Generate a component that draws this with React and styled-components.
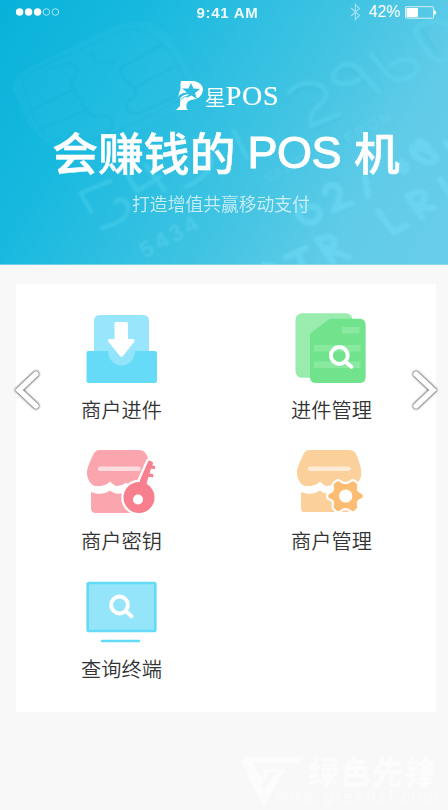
import React from 'react';
import styled, { createGlobalStyle } from 'styled-components';

const GlobalStyle = createGlobalStyle`
  * { box-sizing: border-box; }
  body {
    margin: 0;
    background: #f8f8f8;
    font-family: "Liberation Sans", "Noto Sans CJK SC", sans-serif;
  }
`;

const Screen = styled.div`
  position: relative;
  width: 448px;
  height: 810px;
  overflow: hidden;
  background: #f8f8f8;
`;

const Hero = styled.header`
  position: relative;
  display: flex;
  flex-direction: column;
  align-items: center;
  height: 265px;
  color: #fff;
  background: linear-gradient(121deg, #08b1da 0%, #18b9df 25%, #43c4e3 60%, #61cce8 80%, #69cde9 100%);
`;

const CardArt = styled.svg`
  position: absolute;
  inset: 0;
  width: 448px;
  height: 265px;
`;

const StatusBar = styled.div`
  position: relative;
  display: grid;
  grid-template-columns: 1fr auto 1fr;
  align-items: center;
  width: 100%;
  height: 24px;
  padding: 0 11px 0 16px;
`;

const Clock = styled.span`
  font-size: 15px;
  font-weight: 700;
  letter-spacing: 0.75px;
  padding-left: 2px;
  opacity: 0.92;
`;

const StatusRight = styled.div`
  display: flex;
  align-items: center;
  justify-content: flex-end;
  font-size: 15.6px;
`;

const Percent = styled.span`
  margin: 0 5px 0 8px;
`;

const Brand = styled.div`
  position: relative;
  display: flex;
  align-items: center;
  height: 32px;
  margin-top: 56px;
  padding-left: 6px;
`;

const BrandStar = styled.span`
  margin-left: 1px;
  font: 350 21px/32px "Noto Sans CJK SC", sans-serif;
`;

const BrandName = styled.span`
  display: inline-block;
  font: 28px/32px "Liberation Serif", serif;
  letter-spacing: 0.7px;
  -webkit-text-stroke: 0.2px #fff;
`;

const Headline = styled.h1`
  position: relative;
  display: flex;
  justify-content: center;
  margin: 6px 0 0;
  padding-left: 4px;
  font: 500 45.8px/66px "Noto Sans CJK SC", sans-serif;
  -webkit-text-stroke: 0.5px #fff;
  white-space: pre;
`;

const HeadlineLatin = styled.span`
  padding: 2px 13px 0 12px;
  font: 400 45px/66px "Liberation Sans", sans-serif;
  letter-spacing: -0.5px;
  -webkit-text-stroke: 1.1px #fff;
`;

const Tagline = styled.p`
  position: relative;
  margin: 3px 0 0;
  padding-right: 6px;
  font: 350 17.8px/28px "Noto Sans CJK SC", sans-serif;
  color: rgba(255, 255, 255, 0.72);
`;

const Panel = styled.main`
  display: grid;
  grid-template-columns: 210px 210px;
  grid-template-rows: 131px 128px auto;
  width: 420px;
  height: 428px;
  margin: 19px 0 0 16px;
  padding-top: 29px;
  background: #fff;
`;

const Tile = styled.div`
  display: flex;
  flex-direction: column;
  align-items: center;
`;

const TileIcon = styled.svg`
  width: 72px;
  height: 72px;
  overflow: visible;
`;

const TileLabel = styled.span`
  margin-top: 10px;
  padding-left: 1px;
  font: 350 20.2px/30px "Noto Sans CJK SC", sans-serif;
  color: #333;
`;

const Arrow = styled.svg`
  position: absolute;
  top: 364px;
  left: ${(p) => (p.$next ? '408px' : '10px')};
  width: 34px;
  height: 52px;
  transform: ${(p) => (p.$next ? 'scaleX(-1)' : 'none')};
  filter: drop-shadow(0 0 1px rgba(0, 0, 0, 0.65)) drop-shadow(0 0 1px rgba(0, 0, 0, 0.5));
`;

const Watermark = styled.div`
  position: absolute;
  left: 240px;
  top: 755px;
  display: flex;
  color: #fcfcfc;
`;

const WatermarkText = styled.div`
  display: flex;
  flex-direction: column;
  margin-left: 2px;
`;

const WatermarkName = styled.span`
  font: 900 31px/32px "Noto Sans CJK SC", sans-serif;
  letter-spacing: 1.4px;
  transform: skewX(-6deg);
`;

const WatermarkUrl = styled.span`
  margin-left: -2px;
  align-self: flex-end;
  margin-right: -2px;
  margin-left: -42px;
  font: italic 17px/19px "Liberation Sans", sans-serif;
  letter-spacing: 2px;
`;

function EmbossedCard() {
  return (
    <CardArt viewBox="0 0 448 265" fill="none" aria-hidden="true">
      <defs>
        <filter id="soft" x="-10%" y="-10%" width="120%" height="120%">
          <feGaussianBlur stdDeviation="0.9" />
        </filter>
      </defs>
      <g filter="url(#soft)">
        <path d="M12 88Q14 76 28 68L112 27Q132 18 151 23Q164 28 174 42L194 79Q196 96 184 108L119 139Q72 157 44 140Q31 132 24 116Z" fill="#36c9e9" opacity=".16" />
        <g stroke="#079fcc" strokeWidth="1.6" opacity=".24">
          <path d="M22 84Q24 76 35 70L115 34Q134 25 149 33L172 54L187 83Q190 92 179 101L116 132Q78 145 57 140Q44 137 36 121Z" opacity=".5" />
          <path d="M50 68L70 63Q82 66 76 76Q68 79 72 86L87 111Q91 119 103 115Q114 118 112 125Q108 136 97 138M92 52Q94 64 103 62L116 63M163 44L124 66Q118 70 122 76L134 88Q139 97 129 101Q122 107 130 113L137 114L187 91M28 112L72 90M37 131L86 110M134 88L175 66" />
        </g>
        <g stroke="#65dcf5" strokeLinecap="round" strokeLinejoin="round" opacity=".3">
          <path strokeWidth="4.5" d="M289 92Q299 79 319 85Q331 91 323 102Q308 112 311 126L339 114" />
          <path strokeWidth="4.5" d="M379 92L360 70Q348 58 336 70Q330 79 336 82Q349 86 359 79L364 75" />
          <path strokeWidth="4.5" d="M371 54L389 76Q398 84 413 75Q422 69 414 61Q402 56 386 68" />
          <path strokeWidth="4.5" d="M417 27Q413 34 428 52Q438 66 450 57M417 27Q432 18 446 24" />
          <path strokeWidth="4.5" d="M110 181L81 193L91 211M102 228Q132 221 128 205Q123 196 115 202M127 174L137 191L160 177M146 165L164 190M186 187Q220 170 209 153L195 141M234 131L247 158" />
        </g>
        <g stroke="#078fbb" strokeWidth="1" strokeLinecap="round" opacity=".2">
          <path d="M293 94Q307 81 322 91M315 129L341 117M338 71Q352 64 366 84M375 53L390 72M421 28L438 55M83 193L92 208M105 231Q124 224 130 211" />
        </g>
      </g>
      <g filter="url(#soft)" fill="#72dcf5" fontFamily="Liberation Sans" fontWeight="700">
        <text transform="translate(145 259) rotate(-29)" fontSize="23" letterSpacing="4" opacity=".36">5434</text>
        <text transform="translate(267 184) rotate(-29)" fontSize="15" letterSpacing="1" opacity=".22">VALID</text>
        <text transform="translate(348 145) rotate(-29)" fontSize="16" letterSpacing="2" opacity=".28">FROM</text>
        <g stroke="#76e2fb" strokeWidth="6.5" strokeLinecap="round" strokeLinejoin="round" fill="none" opacity=".38">
          <path d="M299 208Q296 218 306 222Q319 225 320 212Q316 203 299 208M325 193Q326 181 338 187Q343 194 334 210L351 203M365 178L368 196" />
          <path d="M417 148Q407 144 416 157Q433 168 436 157Q430 149 417 148M419 148Q414 136 428 145M396 165L404 172Q411 166 401 162M446 143L456 155" />
          <path d="M317 240L333 262M317 240Q337 232 334 246L325 249L349 257M286 257L306 248M297 252L305 271M378 211L393 232L406 226M407 196L422 217M407 196Q426 187 425 199L417 207L434 208M440 179L449 193M264 265Q280 265 276 274" />
        </g>
      </g>
      <path d="M0 264.5H448" stroke="#a7deea" opacity=".6" />
    </CardArt>
  );
}

const Signal = () => (
  <svg width="44" height="12" viewBox="16 6 44 12" fill="none">
    {[19.6, 28.6, 37.6].map((x) => <circle key={x} cx={x} cy="12" r="3.7" fill="#fff" />)}
    {[46.4, 55.4].map((x) => <circle key={x} cx={x} cy="12" r="3.3" stroke="#fff" strokeWidth=".8" opacity=".8" />)}
  </svg>
);

const Bluetooth = () => (
  <svg width="11" height="18" viewBox="0 0 11 18" fill="none" stroke="#fff" strokeWidth="1.1" opacity=".5">
    <path d="M1 5L9.5 12.5L5.3 16.5V1.5L9.5 5.5L1 13" />
  </svg>
);

const Battery = () => (
  <svg width="32" height="13" viewBox="0 0 32 13">
    <rect x=".5" y=".7" width="28" height="11.5" rx=".8" fill="none" stroke="#fff" opacity=".75" />
    <path d="M1.5 2H13V11.2H1.5Z" fill="#fff" />
    <path d="M29 4Q31.5 5 31.3 6.5Q31.5 8 29 9Z" fill="#fff" />
  </svg>
);

const BrandMark = () => (
  <svg width="29" height="32" viewBox="174 80 29 32">
    <path fill="#fff" d="M180 81H193Q202 83 202 90Q201 99 190 100Q186 101 185.5 105Q185 109 187 110H175L179 106V100Q179 95 188 94L185 98L190.5 95.5L196 99L194 93L199 89L192.5 88.5L190 83L187.5 88.5L181 88.5L186 92.5Q178 93 176.5 98L179.5 89V84Z" />
    <path d="M178 103Q180 97 187 96" stroke="#2abddf" strokeWidth=".8" fill="none" />
  </svg>
);

const Lens = ({ cx, cy }) => (
  <g stroke="#fff" fill="none" strokeLinecap="round">
    <circle cx={cx} cy={cy} r="8.4" strokeWidth="4" />
    <path d={`M${cx + 6.4} ${cy + 6.2}L${cx + 12} ${cy + 11.3}`} strokeWidth="4" />
  </g>
);

const Submit = () => (
  <TileIcon viewBox="85 313 72 72">
    <path d="M94 352V321Q94 315 100 315H143Q149 315 149 321V352Z" fill="#98e6fb" />
    <path d="M88 351H155Q157 351 157 353V381Q157 383 155 383H88.5Q86.5 383 86.5 381V353Q86.5 351 88 351Z" fill="#65dbf8" />
    <path d="M108 351H135A13.5 14.5 0 0 1 108 351Z" fill="#91e4fa" />
    <path d="M116 322H126.5Q128 322 128 324V339H133Q135.5 340 134 342L123 356Q121.5 358 120 356L108.5 342Q107 340 109 339H114.5V324Q114.5 322 116 322Z" fill="#fff" />
  </TileIcon>
);

const Documents = () => (
  <TileIcon viewBox="295 313 72 72">
    <rect x="295.5" y="313.3" width="57" height="64.5" rx="6.5" fill="#9aecae" />
    <path d="M332 318.7H360Q365.6 319 365.6 325V377Q365.6 383 359.5 383H316Q310 383 310 377V335Q310 333 312 332L328 320Q330 318.7 332 318.7Z" fill="#71e38c" />
    <path d="M342 327H359.5V333.5H342ZM314 345H360.5V351.5H314ZM314 361.5H360.5V368H314Z" fill="#88e99f" />
    <Lens cx={339.3} cy={355.5} />
  </TileIcon>
);

const Shop = ({ color, shade }) => (
  <>
    <path d="M100 450H139C144 450 146 453 147.5 457C149 463 151.5 466 151.2 474C151 481 146 486 140 486C134 486 129 485 126 482.7Q121 486.500 116 486Q112.500 484.500 110 481.500C106 486 100 486.3 96 486C91 486 87 479 87 473C87 467 91 460 93 455C95 451 97 450 100 450Z" fill={color} />
    <path d="M91 492C98 495 105 494 110 490.500C115 494.500 122 495 126 491L145 493V513H96Q91 513 91 508Z" fill={color} />
    <path d="M100 468.7H138.5" stroke={shade} strokeWidth="4.5" strokeLinecap="round" />
  </>
);

const KeyShape = ({ fill, ...rest }) => (
  <g fill={fill} {...rest}>
    <circle cx="139" cy="497.5" r="15.5" />
    <path d="M140 480L148.2 461.3Q149 460 150.5 461L152.5 462Q153.3 462.7 152.8 464L152.3 465.5L155 466V469L151 468.7L149.5 473.5L153.2 474V477.6L148.5 476.8L146.5 484L140 490Z" />
  </g>
);

const ShopKey = () => (
  <TileIcon viewBox="85 444 72 72">
    <Shop color="#fba5ae" shade="#fddce0" />
    <KeyShape fill="#fff" stroke="#fff" strokeWidth="4.6" />
    <KeyShape fill="#f8808e" />
    <circle cx="138" cy="499.5" r="5" fill="#fff" />
  </TileIcon>
);

const gear = 'M336.500 482Q338.500 480.500 340.500 482.500Q345.500 486 350.500 482.500Q352.500 480.500 354.500 482L356.500 483.500Q358 485 357 487Q356 492 361 493.500Q362.800 494 362.800 496Q362.800 498 361 498.500Q356 500 357 505Q358 507 356.500 508.500L354.500 510.500Q352.500 512 350.500 510Q345.500 506 340.500 510Q338.500 512 336.500 510.500L334.500 508.500Q333 507 334 505Q335 500 330 498.500Q328.200 498 328.200 496Q328.200 494 330 493.500Q335 492 334 487Q333 485 334.500 483.500Z';

const ShopGear = () => (
  <TileIcon viewBox="295 444 72 72">
    <clipPath id="shopBase"><path d="M295 444H367V512H295Z" /></clipPath>
    <g clipPath="url(#shopBase)">
      <g transform="translate(210 0)"><Shop color="#fbd09a" shade="#fdebd7" /></g>
    </g>
    <path d={gear} fill="#fff" stroke="#fff" strokeWidth="4.4" />
    <path d={gear} fill="#fcbd72" />
    <circle cx="345.7" cy="496" r="6.6" fill="#fff" />
  </TileIcon>
);

const Terminal = () => (
  <TileIcon viewBox="85 572 72 72">
    <rect x="87.7" y="583" width="67.6" height="48" rx="1.2" fill="#94e5fa" stroke="#65dbf8" strokeWidth="2.7" />
    <Lens cx={119.5} cy={605} />
    <path d="M102 641H139" stroke="#65dbf8" strokeWidth="2.5" strokeLinecap="round" />
  </TileIcon>
);

const Chevron = ({ next }) => (
  <Arrow $next={next} viewBox="10 364 34 52" fill="none">
    <path d="M36 374L19 390L36 406" stroke="#fff" strokeWidth="5.4" strokeLinecap="round" strokeLinejoin="miter" />
  </Arrow>
);

const tiles = [
  { label: '商户进件', Icon: Submit },
  { label: '进件管理', Icon: Documents },
  { label: '商户密钥', Icon: ShopKey },
  { label: '商户管理', Icon: ShopGear },
  { label: '查询终端', Icon: Terminal },
];

export default function App() {
  return (
    <Screen>
      <GlobalStyle />
      <Hero>
        <EmbossedCard />
        <StatusBar>
          <Signal />
          <Clock>9:41 AM</Clock>
          <StatusRight>
            <Bluetooth />
            <Percent>42%</Percent>
            <Battery />
          </StatusRight>
        </StatusBar>
        <Brand>
          <BrandMark />
          <BrandStar>星</BrandStar>
          <BrandName>POS</BrandName>
        </Brand>
        <Headline>会赚钱的<HeadlineLatin>POS</HeadlineLatin>机</Headline>
        <Tagline>打造增值共赢移动支付</Tagline>
      </Hero>
      <Panel>
        {tiles.map(({ label, Icon }) => (
          <Tile key={label}>
            <Icon />
            <TileLabel>{label}</TileLabel>
          </Tile>
        ))}
      </Panel>
      <Chevron />
      <Chevron next />
      <Watermark>
        <svg width="66" height="52" viewBox="240 755 66 52">
          <path d="M244 757H304L299 763H253L264 781L260 787L241 763ZM262 769H286L264 806L246 776L253 771L264 789L277 772H270L265 780Z" fill="#fcfcfc" />
        </svg>
        <WatermarkText>
          <WatermarkName>绿色先锋</WatermarkName>
          <WatermarkUrl>www.greenxf.com</WatermarkUrl>
        </WatermarkText>
      </Watermark>
    </Screen>
  );
}
